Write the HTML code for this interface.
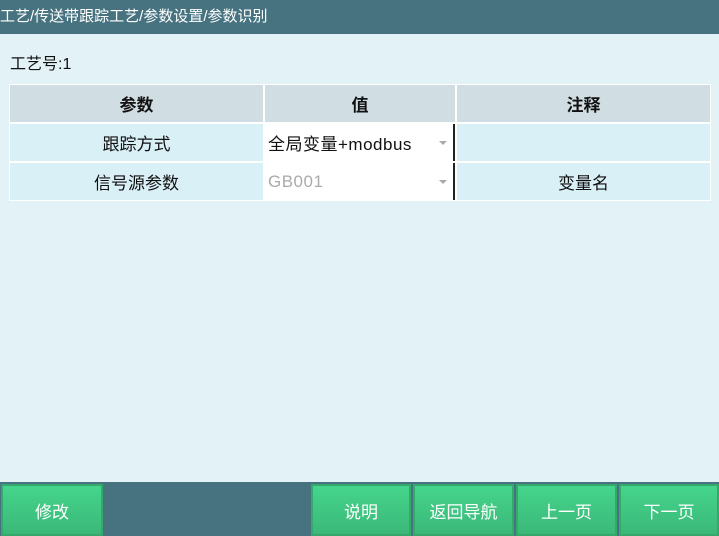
<!DOCTYPE html>
<html><head><meta charset="utf-8"><style>
*{margin:0;padding:0;box-sizing:border-box}
body{width:719px;height:536px;background:#e3f2f7;font-family:"Liberation Sans","Noto Sans CJK SC",sans-serif;position:relative;overflow:hidden}
.top{position:absolute;left:0;top:0;width:719px;height:34px;background:#477381;color:#fff;font-size:15px;line-height:34px;padding-left:0}
.no{position:absolute;left:10px;top:50px;font-size:16px;color:#111}
.tb{position:absolute;left:9px;top:84px;width:702px;height:117px;background:#fff}
.c{position:absolute;display:flex;align-items:center;justify-content:center;font-size:17px;color:#111}
.h{background:#d0dde2;font-weight:bold}
.r{background:#daf0f7}
.sel{background:#fff;justify-content:flex-start;padding-left:3px;border-right:2px solid #222;letter-spacing:0.5px}
.arr{position:absolute;right:6px;top:17px;width:0;height:0;border-left:4px solid transparent;border-right:4px solid transparent;border-top:4px solid #aaa}
.bar{position:absolute;left:0;top:482px;width:719px;height:54px;background:#477381}
.b{position:absolute;top:484px;height:52px;background:linear-gradient(#45d58c,#3bb878);border:2px solid #35a86c;color:#fff;font-size:17px;display:flex;align-items:center;justify-content:center}
</style></head><body>
<div class="top">工艺/传送带跟踪工艺/参数设置/参数识别</div>
<div class="no">工艺号:1</div>
<div class="tb"></div>
<div class="c h" style="left:10px;top:85px;width:253px;height:37px">参数</div>
<div class="c h" style="left:265px;top:85px;width:190px;height:37px">值</div>
<div class="c h" style="left:457px;top:85px;width:253px;height:37px">注释</div>
<div class="c r" style="left:10px;top:124px;width:253px;height:37px">跟踪方式</div>
<div class="c sel" style="left:265px;top:124px;width:190px;height:37px">全局变量+modbus<span class="arr"></span></div>
<div class="c r" style="left:457px;top:124px;width:253px;height:37px"></div>
<div class="c r" style="left:10px;top:163px;width:253px;height:37px">信号源参数</div>
<div class="c sel" style="left:265px;top:163px;width:190px;height:37px;color:#aaa">GB001<span class="arr"></span></div>
<div class="c r" style="left:457px;top:163px;width:253px;height:37px">变量名</div>
<div class="bar"></div>
<div class="b" style="left:1px;width:102px">修改</div>
<div class="b" style="left:311px;width:100px">说明</div>
<div class="b" style="left:413px;width:101px">返回导航</div>
<div class="b" style="left:516px;width:101px">上一页</div>
<div class="b" style="left:619px;width:100px">下一页</div>
</body></html>
